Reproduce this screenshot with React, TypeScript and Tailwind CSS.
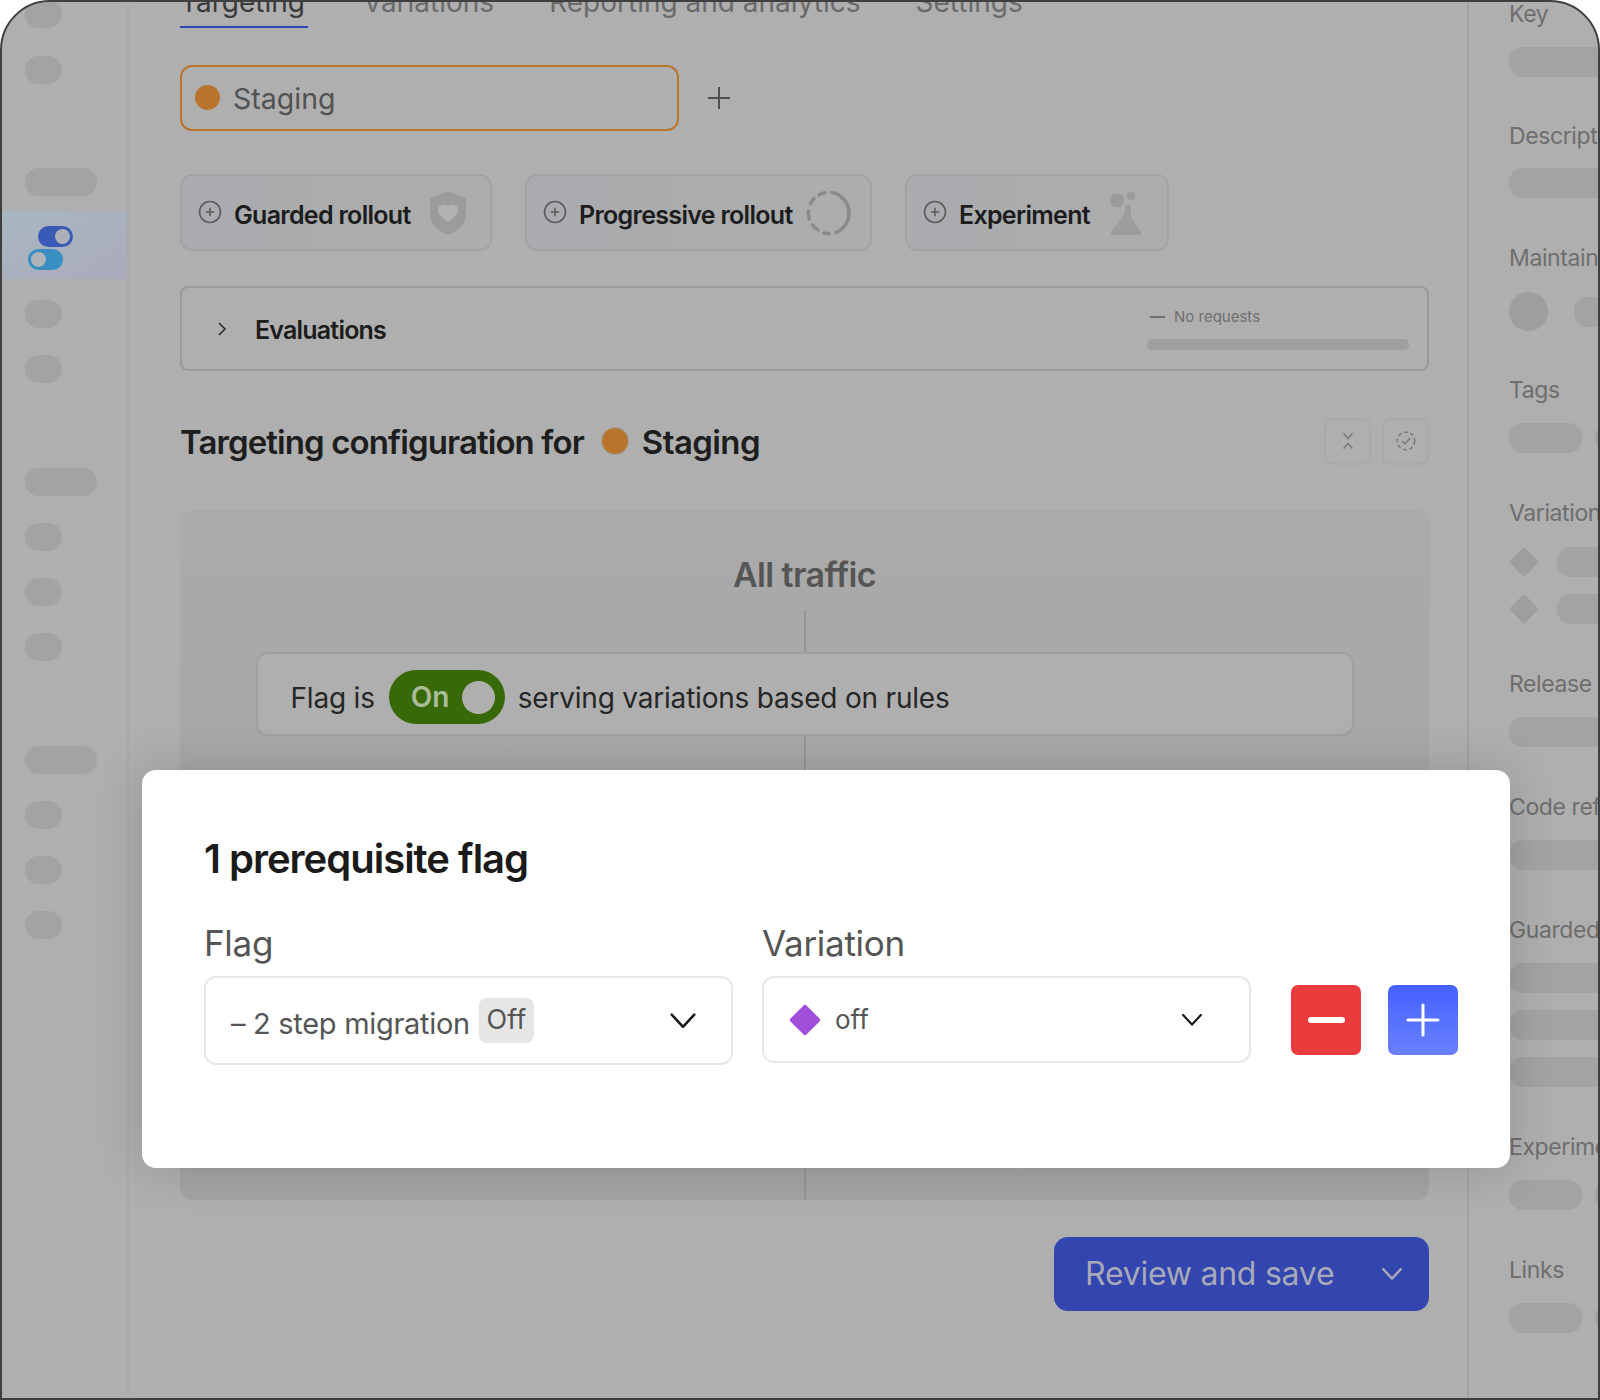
import React from "react";

function Pill({ wide, className = "" }: { wide?: boolean; className?: string }) {
  return <div className={`${wide ? "w-[72px]" : "w-[37px]"} h-[28px] rounded-[14px] bg-[#a3a3a3] ${className}`} />;
}

function PlusCircle() {
  return (
    <svg width="24" height="24" viewBox="0 0 24 24" fill="none" stroke="#5c5c5c" strokeWidth="1.6" className="shrink-0 -mt-[1px]">
      <circle cx="12" cy="12" r="10.5" />
      <path d="M12 7.8v8.4M7.8 12h8.4" />
    </svg>
  );
}

function Chevron({ size, color, stroke = 2.4 }: { size: number; color: string; stroke?: number }) {
  return (
    <svg width={size} height={size * 0.62} viewBox="0 0 32 20" fill="none" stroke={color} strokeWidth={stroke * 32 / size} strokeLinecap="round" strokeLinejoin="round" className="shrink-0">
      <path d="M3 3l13 14L29 3" />
    </svg>
  );
}

function Diamond({ size, color }: { size: number; color: string }) {
  return (
    <svg width={size} height={size} viewBox="0 0 30 30" className="shrink-0">
      <path d="M13.4 1.6a2.2 2.2 0 0 1 3.2 0l11.8 11.8a2.2 2.2 0 0 1 0 3.2L16.6 28.4a2.2 2.2 0 0 1-3.2 0L1.6 16.6a2.2 2.2 0 0 1 0-3.2z" fill={color} />
    </svg>
  );
}

function RolloutCard({ label, width, icon }: { label: string; width: string; icon: React.ReactNode }) {
  return (
    <div className={`${width} h-[77px] rounded-[12px] border-2 border-[#a3a3a3] bg-gradient-to-r from-[#a9abae] to-[#adadad] flex items-center pl-[16px] relative`}>
      <PlusCircle />
      <span className="ml-[12px] mt-[6px] text-[25px] font-semibold text-[#1c1c1c] tracking-[-0.7px] whitespace-nowrap">{label}</span>
      <div className="ml-auto flex items-center">{icon}</div>
    </div>
  );
}

function SideLabel({ children, className = "" }: { children: React.ReactNode; className?: string }) {
  return <div className={`text-[23px] leading-[30px] tracking-[-0.4px] text-[#6e6e6e] whitespace-nowrap ${className}`}>{children}</div>;
}

function SideBar({ className = "", short }: { className?: string; short?: boolean }) {
  return <div className={`${short ? "w-[73px]" : "w-[140px]"} h-[30px] rounded-[14px] bg-[#a3a3a3] shrink-0 ${className}`} />;
}

export default function App() {
  return (
    <div className="w-[1600px] h-[1400px] bg-white" style={{ fontFamily: "Inter, 'Liberation Sans', sans-serif" }}>
      <div className="relative w-full h-full overflow-hidden rounded-t-[50px] border-2 border-[#3f3f3f] bg-[#afafaf] flex">
        {/* left rail */}
        <aside className="w-[127px] shrink-0 border-r-2 border-[#a9a9a9] flex flex-col items-start">
          <Pill className="ml-[23px] -mt-[2px]" />
          <Pill className="ml-[23px] mt-[28px]" />
          <Pill wide className="ml-[23px] mt-[84px]" />
          <div className="mt-[15px] w-full h-[68px] bg-gradient-to-br from-[#a8b7c0] to-[#aaaabb] relative">
            <svg width="50" height="50" viewBox="0 0 50 50" className="absolute left-[24px] top-[13px]">
              <rect x="12" y="2" width="35" height="21" rx="10.5" fill="#3a5ab8" />
              <circle cx="36.5" cy="12.5" r="7.5" fill="#aeb1b8" />
              <rect x="2" y="25" width="35" height="21" rx="10.5" fill="#3a8fc2" />
              <circle cx="12.5" cy="35.5" r="7.5" fill="#aeb4b8" />
            </svg>
          </div>
          <Pill className="ml-[23px] mt-[21px]" />
          <Pill className="ml-[23px] mt-[27px]" />
          <Pill wide className="ml-[23px] mt-[85px]" />
          <Pill className="ml-[23px] mt-[27px]" />
          <Pill className="ml-[23px] mt-[27px]" />
          <Pill className="ml-[23px] mt-[27px]" />
          <Pill wide className="ml-[23px] mt-[85px]" />
          <Pill className="ml-[23px] mt-[27px]" />
          <Pill className="ml-[23px] mt-[27px]" />
          <Pill className="ml-[23px] mt-[27px]" />
        </aside>

        {/* main */}
        <main className="w-[1340px] shrink-0 border-r-2 border-[#a3a3a3] pl-[51px] pr-[38px] flex flex-col">
          <div className="-mt-[15px] h-[41px] flex gap-[55px] text-[28px] leading-[30px] text-[#6a6a6a] whitespace-nowrap">
            <div className="h-[41px] border-b-2 border-[#3345ae] text-[#3a3a3a] pr-[3px]">Targeting</div>
            <div>Variations</div>
            <div>Reporting and analytics</div>
            <div>Settings</div>
          </div>

          <div className="mt-[37px] flex items-center">
            <div className="w-[499px] h-[66px] rounded-[12px] border-2 border-[#b9752a] flex items-center pl-[13px]">
              <div className="w-[25px] h-[25px] rounded-full bg-[#b8742a] mb-[2px]" />
              <span className="ml-[13px] mt-[2px] text-[28.5px] text-[#525252]">Staging</span>
            </div>
            <svg width="24" height="24" viewBox="0 0 24 24" className="ml-[28px]" fill="none" stroke="#4f4f4f" strokeWidth="2">
              <path d="M12 1v22M1 12h22" />
            </svg>
          </div>

          <div className="mt-[43px] flex gap-[33px]">
            <RolloutCard
              label="Guarded rollout"
              width="w-[312px]"
              icon={
                <svg width="40" height="46" viewBox="0 0 40 46" className="mr-[22px]">
                  <path d="M20 1l18 7v15c0 12-8 18-18 22C10 41 2 35 2 23V8z" fill="#9b9b9b" />
                  <path d="M20 32c-6-4.500-10-8-10-12a5.500 5.500 0 0 1 10-3.200A5.500 5.500 0 0 1 30 20c0 4-4 7.500-10 12z" fill="#b3b3b3" />
                </svg>
              }
            />
            <RolloutCard
              label="Progressive rollout"
              width="w-[347px]"
              icon={
                <svg width="46" height="46" viewBox="0 0 46 46" className="mr-[18px]" fill="none" stroke="#8b8b8b" strokeWidth="3.600" strokeLinecap="round">
                  <path d="M26 2.500A21 21 0 0 1 30 42.500" />
                  <path d="M23 43.800a21 21 0 0 1-5-.7" />
                  <path d="M12 40a21 21 0 0 1-5.500-5" />
                  <path d="M3.300 29a21 21 0 0 1-.9-8" />
                  <path d="M4.500 13.500a21 21 0 0 1 3.500-5" />
                  <path d="M13 4.800a21 21 0 0 1 6-2" />
                </svg>
              }
            />
            <RolloutCard
              label="Experiment"
              width="w-[264px]"
              icon={
                <svg width="36" height="44" viewBox="0 0 36 44" className="mr-[23px]">
                  <circle cx="9" cy="9.500" r="7" fill="#9b9b9b" />
                  <circle cx="23" cy="5" r="4" fill="#9b9b9b" />
                  <path d="M17 14h6v12l10 15a2 2 0 0 1-1.700 3H4.700A2 2 0 0 1 3 41l12-16c1.500-2 2-4 2-6z" fill="#9d9d9d" />
                </svg>
              }
            />
          </div>

          <div className="mt-[35px] h-[85px] rounded-[8px] border-2 border-[#9a9a9a] flex items-center relative">
            <svg width="10" height="16" viewBox="0 0 10 16" className="ml-[35px]" fill="none" stroke="#2c2c2c" strokeWidth="1.600">
              <path d="M2 2l6 6-6 6" />
            </svg>
            <span className="ml-[28px] mt-[4px] text-[25px] font-semibold text-[#1c1c1c] tracking-[-0.8px]">Evaluations</span>
            <div className="ml-auto mr-[18px] w-[262px] flex flex-col self-start mt-[17px]">
              <div className="flex items-center pl-[3px] h-[24px]">
                <div className="w-[15px] h-[2px] bg-[#6f6f6f]" />
                <span className="ml-[9px] text-[15px] text-[#6f6f6f]">No requests</span>
              </div>
              <div className="mt-[10px] h-[11px] rounded-[5px] bg-[#9f9f9f]" />
            </div>
          </div>

          <div className="mt-[46px] h-[48px] flex items-center">
            <span className="mt-[3px] text-[33px] font-semibold text-[#1e1e1e] tracking-[-0.9px]">Targeting configuration for</span>
            <div className="ml-[17px] w-[28px] h-[28px] rounded-full bg-[#b8742a] border border-[#a0a0a0] -mt-[1px]" />
            <span className="ml-[13px] mt-[3px] text-[33px] font-semibold text-[#1e1e1e] tracking-[-0.6px]">Staging</span>
            <div className="ml-auto flex gap-[11px]">
              <div className="w-[47px] h-[47px] rounded-[8px] border-2 border-[#a9a9a9] flex items-center justify-center">
                <svg width="12" height="18" viewBox="0 0 12 18" fill="none" stroke="#777" strokeWidth="1.500">
                  <path d="M1.500 1.500L6 6.500l4.500-5M1.500 16.500L6 11.500l4.500 5" />
                </svg>
              </div>
              <div className="w-[47px] h-[47px] rounded-[8px] border-2 border-[#a9a9a9] flex items-center justify-center">
                <svg width="20" height="20" viewBox="0 0 20 20" fill="none" stroke="#777" strokeWidth="1.400">
                  <circle cx="10" cy="10" r="8.800" strokeDasharray="4 2.500" />
                  <path d="M6 10l3 3 5-6" />
                </svg>
              </div>
            </div>
          </div>

          <div className="mt-[45px] h-[690px] rounded-[12px] bg-gradient-to-b from-[#aaaaaa] to-[#a4a4a4] flex flex-col items-center">
            <div className="mt-[43px] h-[44px] leading-[44px] text-[34px] font-semibold text-[#555555] tracking-[-0.6px]">All traffic</div>
            <div className="mt-[13px] w-[2px] h-[42px] bg-[#969696]" />
            <div className="w-[1098px] h-[84px] rounded-[12px] border-2 border-[#a0a0a0] bg-[#afafaf] flex items-center pl-[33px] shrink-0">
              <span className="mt-[8px] text-[28px] text-[#262626] tracking-[-0.2px]">Flag is</span>
              <div className="ml-[14px] mt-[6px] w-[116px] h-[54px] rounded-[27px] bg-[#376909] flex items-center justify-between pl-[22px] pr-[10px]">
                <span className="text-[28px] font-semibold text-[#a9bd9a]">On</span>
                <div className="w-[33px] h-[33px] rounded-full bg-[#afb0ae]" />
              </div>
              <span className="ml-[13px] mt-[8px] text-[28px] text-[#262626] tracking-[-0.2px]">serving variations based on rules</span>
            </div>
            <div className="w-[2px] flex-1 bg-[#969696]" />
          </div>

          <div className="mt-[37px] self-end w-[375px] h-[74px] rounded-[14px] bg-[#3345ae] flex items-center pl-[31px]">
            <span className="text-[32px] text-[#a7a9b9] tracking-[-0.25px]">Review and save</span>
            <div className="ml-auto mr-[26px]">
              <Chevron size={22} color="#a7a9b9" stroke={2.400} />
            </div>
          </div>
        </main>

        {/* right panel */}
        <aside className="flex-1 pl-[40px] flex flex-col items-start min-w-0 overflow-hidden">
          <SideLabel className="-mt-[3px]">Key</SideLabel>
          <SideBar className="mt-[18px]" />
          <SideLabel className="mt-[44px]">Description</SideLabel>
          <SideBar className="mt-[17px]" />
          <SideLabel className="mt-[45px]">Maintainer</SideLabel>
          <div className="mt-[19px] flex items-center gap-[26px]">
            <div className="w-[39px] h-[39px] rounded-full bg-[#9e9e9e] shrink-0" />
            <SideBar />
          </div>
          <SideLabel className="mt-[44px]">Tags</SideLabel>
          <div className="mt-[18px] flex gap-[13px]">
            <SideBar short />
            <SideBar short />
          </div>
          <SideLabel className="mt-[45px]">Variations</SideLabel>
          <div className="mt-[19px] flex items-center gap-[18px]">
            <Diamond size={30} color="#9e9e9e" />
            <SideBar />
          </div>
          <div className="mt-[17px] flex items-center gap-[18px]">
            <Diamond size={30} color="#9e9e9e" />
            <SideBar />
          </div>
          <SideLabel className="mt-[45px]">Release</SideLabel>
          <SideBar className="mt-[18px]" />
          <SideLabel className="mt-[45px]">Code refs</SideLabel>
          <SideBar className="mt-[18px]" />
          <SideLabel className="mt-[45px]">Guarded</SideLabel>
          <SideBar className="mt-[18px]" />
          <SideBar className="mt-[17px]" />
          <SideBar className="mt-[17px]" />
          <SideLabel className="mt-[45px]">Experiments</SideLabel>
          <div className="mt-[18px] flex gap-[13px]">
            <SideBar short />
            <SideBar short />
          </div>
          <SideLabel className="mt-[45px]">Links</SideLabel>
          <div className="mt-[18px] flex gap-[13px]">
            <SideBar short />
            <SideBar short />
          </div>
        </aside>

        {/* modal */}
        <div className="absolute left-[140px] top-[768px] w-[1368px] h-[398px] rounded-[14px] bg-white shadow-[0_0_50px_rgba(0,0,0,0.16)] pl-[62px] pr-[51px] flex flex-col">
          <div className="mt-[62px] h-[54px] leading-[54px] text-[40px] font-semibold text-[#1a1a1a] tracking-[-1px] whitespace-nowrap">1 prerequisite flag</div>
          <div className="mt-[34px] flex items-start">
            <div className="w-[529px]">
              <div className="h-[46px] leading-[46px] text-[35px] text-[#555555] tracking-[-0.3px]">Flag</div>
              <div className="mt-[10px] h-[89px] rounded-[12px] border-2 border-[#e8e8e8] flex items-center pl-[25px] pr-[34px]">
                <span className="text-[29px] text-[#555555] tracking-[-0.3px] mt-[6px] whitespace-nowrap">– 2 step migration</span>
                <span className="ml-[9px] h-[45px] w-[55px] rounded-[8px] bg-[#e6e6e6] flex items-center justify-center text-[27px] text-[#555555]">Off</span>
                <div className="ml-auto"><Chevron size={28} color="#1a1a1a" stroke={2.600} /></div>
              </div>
            </div>
            <div className="ml-[29px] w-[489px]">
              <div className="h-[46px] leading-[46px] text-[35px] text-[#555555] tracking-[-0.3px]">Variation</div>
              <div className="mt-[10px] h-[87px] rounded-[12px] border-2 border-[#e8e8e8] flex items-center pl-[25px] pr-[46px]">
                <Diamond size={32} color="#a14fdb" />
                <span className="ml-[14px] text-[26px] text-[#555555]">off</span>
                <div className="ml-auto"><Chevron size={22} color="#1a1a1a" stroke={2.200} /></div>
              </div>
            </div>
            <div className="ml-[40px] mt-[65px] flex gap-[27px]">
              <div className="w-[70px] h-[70px] rounded-[7px] bg-[#ea3b3d] flex items-center justify-center">
                <div className="w-[37px] h-[6px] rounded-[3px] bg-white" />
              </div>
              <div className="w-[70px] h-[70px] rounded-[7px] bg-gradient-to-b from-[#4560ff] to-[#6a80ff] flex items-center justify-center">
                <svg width="34" height="34" viewBox="0 0 34 34" fill="none" stroke="white" strokeWidth="3" strokeLinecap="round">
                  <path d="M17 2v30M2 17h30" />
                </svg>
              </div>
            </div>
          </div>
        </div>
      </div>
    </div>
  );
}
